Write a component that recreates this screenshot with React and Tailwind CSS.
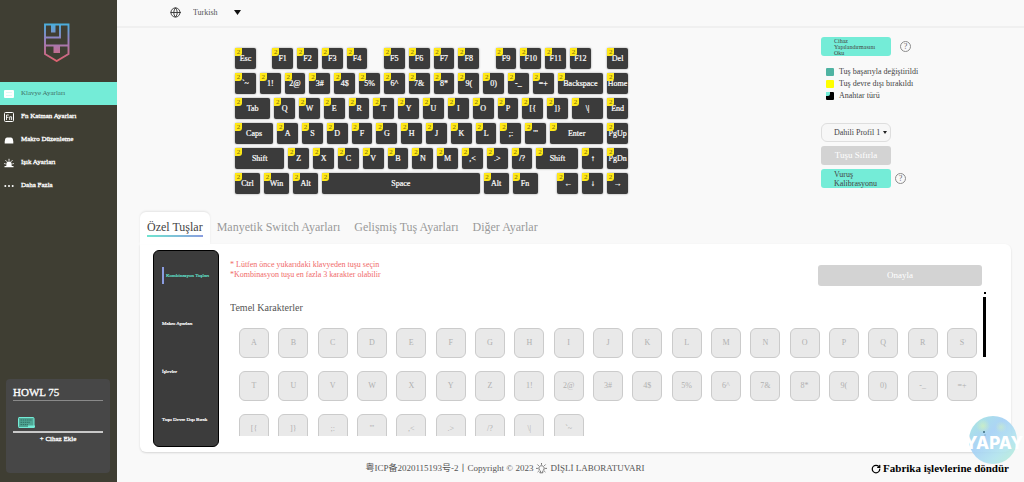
import { useState } from 'react'
import { Globe, RotateCw } from 'lucide-react'

// [label, width in key units], a null label leaves an empty space
const keyboardRows = [
  [['Esc', 1], [null, 0.5], ['F1', 1], ['F2', 1], ['F3', 1], ['F4', 1], [null, 0.5], ['F5', 1], ['F6', 1], ['F7', 1], ['F8', 1], [null, 0.5], ['F9', 1], ['F10', 1], ['F11', 1], ['F12', 1], [null, 0.5], ['Del', 1]],
  [['`~', 1], ['1!', 1], ['2@', 1], ['3#', 1], ['4$', 1], ['5%', 1], ['6^', 1], ['7&', 1], ['8*', 1], ['9(', 1], ['0)', 1], ['-_', 1], ['=+', 1], ['Backspace', 2], ['Home', 1]],
  [['Tab', 1.58], ['Q', 1], ['W', 1], ['E', 1], ['R', 1], ['T', 1], ['Y', 1], ['U', 1], ['I', 1], ['O', 1], ['P', 1], ['[{', 1], [']}', 1], ['\\|', 1.42], ['End', 1]],
  [['Caps', 1.7], ['A', 1], ['S', 1], ['D', 1], ['F', 1], ['G', 1], ['H', 1], ['J', 1], ['K', 1], ['L', 1], [';:', 1], ['\'"', 1], ['Enter', 2.3], ['PgUp', 1]],
  [['Shift', 2.15], ['Z', 1], ['X', 1], ['C', 1], ['V', 1], ['B', 1], ['N', 1], ['M', 1], [',<', 1], ['.>', 1], ['/?', 1], ['Shift', 1.85], ['↑', 1], ['PgDn', 1]],
  [['Ctrl', 1.17], ['Win', 1.17], ['Alt', 1.17], ['Space', 6.51], ['Alt', 1.17], ['Fn', 1.17], [null, 0.64], ['←', 1], ['↓', 1], ['→', 1]],
]
const ROW_UNITS = 16

const characters = [
  ...'ABCDEFGHIJKLMNOPQRSTUVWXYZ',
  '1!', '2@', '3#', '4$', '5%', '6^', '7&', '8*', '9(', '0)', '-_', '=+',
  '[{', ']}', ';:', '\'"', ',<', '.>', '/?', '\\|', '`~',
]

const navItems = ['Klavye Ayarları', 'Fn Katman Ayarları', 'Makro Düzenleme', 'Işık Ayarları', 'Daha Fazla']
const tabs = ['Özel Tuşlar', 'Manyetik Switch Ayarları', 'Gelişmiş Tuş Ayarları', 'Diğer Ayarlar']
const sections = ['Kombinasyon Tuşları', 'Makro Ayarları', 'İşlevler', 'Tuşu Devre Dışı Bırak']

function Logo() {
  return (
    <svg className="w-[27px] h-10" viewBox="0 0 27 40" fill="none" aria-hidden="true">
      <defs>
        <linearGradient id="logo" x1="0" y1="0" x2="0" y2="40" gradientUnits="userSpaceOnUse">
          <stop offset="0" stopColor="#3fb4e0" />
          <stop offset="0.45" stopColor="#9a7fc0" />
          <stop offset="1" stopColor="#e0606c" />
        </linearGradient>
      </defs>
      <path d="M2 2.500H25.500V32L13.700 39L2 32Z M17 2.500V15.500H2 M2 23.500H25" stroke="url(#logo)" strokeWidth="1.900" />
      <path d="M8 2H12.500V10.500H8Z M10.500 23H17V31H10.500Z" fill="url(#logo)" />
    </svg>
  )
}

function NavIcon({ index }) {
  return (
    <svg className="w-[10px] h-[10px]" viewBox="0 0 10 10" fill="currentColor" aria-hidden="true">
      {index === 0 && (
        <>
          <rect x="0" y="1" width="10" height="8" rx="1" />
          <path d="M2 3.500h6M2 6.500h6" stroke="#c9f7ee" strokeWidth="0.600" />
        </>
      )}
      {index === 1 && (
        <>
          <rect x="0.500" y="0.500" width="9" height="9" rx="1" fill="none" stroke="currentColor" />
          <path d="M2.500 8V3H4.800M2.500 5.300H4.500M5.700 8V4.800H7.600V8" fill="none" stroke="currentColor" strokeWidth="0.900" />
        </>
      )}
      {index === 2 && <path d="M3 2.500h4q1.500 0 1.800 1.500L9.300 6.500v2H.7v-2L1.200 4q.3-1.500 1.800-1.500z" />}
      {index === 3 && (
        <>
          <path d="M2.300 8V6.300a2.700 2.700 0 0 1 5.400 0V8H9.500v1.200h-9V8z" />
          <path d="M5 .8v2M.2 5.500l1.500.4M9.800 5.500l-1.500.4M1.500 2.200l1.600 1.600M8.500 2.200L6.900 3.800" stroke="currentColor" strokeWidth="0.900" />
        </>
      )}
      {index === 4 && (
        <>
          <circle cx="1.300" cy="5" r="1" />
          <circle cx="5" cy="5" r="1" />
          <circle cx="8.700" cy="5" r="1" />
        </>
      )}
    </svg>
  )
}

function LampIcon() {
  return (
    <svg className="w-[11px] h-[11px]" viewBox="0 0 11 11" fill="none" stroke="#555" strokeWidth="0.800" strokeLinecap="round" aria-hidden="true">
      <path d="M4.200 7.800A2.700 2.700 0 1 1 6.800 7.800V9.800H4.200Z" />
      <path d="M5.500.4V1.400M.4 5.400H1.500M9.500 5.400H10.600M1.700 1.800L2.500 2.600M9.300 1.800L8.500 2.600M1.900 8.800L2.600 8.100M9.100 8.800L8.400 8.100" />
    </svg>
  )
}

function Help() {
  return (
    <button aria-label="Yardım" className="w-[11px] h-[11px] flex items-center justify-center rounded-full border border-[#8c8c8c] text-[8px] leading-none text-[#666]">
      ?
    </button>
  )
}

function Sidebar() {
  const [active, setActive] = useState(0)

  return (
    <aside className="w-[117px] shrink-0 flex flex-col bg-[#3f3e33] text-white">
      <div className="h-[82px] pt-[22px] pr-1 flex justify-center">
        <Logo />
      </div>
      <nav>
        {navItems.map((item, i) => (
          <a
            key={item}
            href="#"
            onClick={() => setActive(i)}
            className={`h-[23px] pl-1 flex items-center gap-[7px] text-[7px] ${i === active ? 'bg-[#74ecd7]' : ''}`}
          >
            <NavIcon index={i} />
            <span className={i === active ? 'text-[#3f6f66]' : 'text-white [-webkit-text-stroke:0.3px_white]'}>{item}</span>
          </a>
        ))}
      </nav>

      {/* Connected device */}
      <div className="mt-auto mb-[9px] ml-[6px] mr-[7px] h-[94px] px-[7px] pt-[6px] rounded-sm bg-[#474747]">
        <h2 className="pb-px text-[11px] leading-[14px] [-webkit-text-stroke:0.3px_white] border-b border-[#8a8a8a]">HOWL 75</h2>
        <div className="h-8 pl-[5px] pt-4 border-b-2 border-[#c9c9c9]">
          <svg className="w-[17px] h-3" viewBox="0 0 17 12" fill="none" aria-hidden="true">
            <path d="M1 .5H15Q16 .5 16 1.500V10.500H1Q.5 10.500 .5 9.500V1.500Q.5 .5 1 .5Z" fill="#4fa594" stroke="#74ecd7" />
            <path d="M2.500 3H14M2.500 5.300H12M2.500 7.600H10" stroke="#2f6f62" strokeDasharray="1.500 .7" />
            <path d="M10 9.500H17" stroke="#74ecd7" strokeWidth="2" />
          </svg>
        </div>
        <button className="block mx-auto mt-px text-[7px] leading-[10px] [-webkit-text-stroke:0.3px_white]">+ Cihaz Ekle</button>
      </div>
    </aside>
  )
}

function Keyboard() {
  return (
    <div className="w-[397px]">
      {keyboardRows.map((row, r) => (
        <div key={r} className="flex">
          {row.map(([label, units], i) => (
            <div key={i} className="h-[25px] p-[2px] shrink-0" style={{ width: `${(units / ROW_UNITS) * 100}%` }}>
              {label && (
                <button className="relative w-full h-full flex items-center justify-center rounded-[2px] bg-[#3b3b3b] shadow-[0_0_2px_#888] text-[8px] leading-none text-white [-webkit-text-stroke:0.2px_white]">
                  <span className="absolute left-0 top-0 w-[7px] h-2 flex items-center justify-center rounded-br-[3px] bg-[#ffe818] text-[7px] leading-none text-[#7a6a10] [-webkit-text-stroke:0px]">2</span>
                  {label}
                </button>
              )}
            </div>
          ))}
        </div>
      ))}
    </div>
  )
}

function DeviceActions() {
  return (
    <div className="w-[96px] text-[8px] text-[#444]">
      <div className="flex items-center gap-[9px]">
        <button className="w-[70px] h-[19px] shrink-0 pl-[13px] pr-2 rounded-[3px] bg-[#74ecd7] text-left text-[6px] leading-[6px]">Cihaz Yapılandırmasını Oku</button>
        <Help />
      </div>

      <ul className="mt-[10px] pl-[5px] whitespace-nowrap leading-3">
        <li className="flex items-center gap-[5px]">
          <span className="w-2 h-2 shrink-0 rounded-[1px] bg-[#4fb3a2]" />
          Tuş başarıyla değiştirildi
        </li>
        <li className="flex items-center gap-[5px]">
          <span className="w-2 h-2 shrink-0 rounded-[1px] bg-[#ffff00]" />
          Tuş devre dışı bırakıldı
        </li>
        <li className="flex items-center gap-[5px]">
          <span className="w-2 h-2 shrink-0 rounded-[1px] bg-black">
            <span className="block w-1 h-1 rounded-br-[2px] bg-[#74ecd7]" />
          </span>
          Anahtar türü
        </li>
      </ul>

      <div className="relative w-[70px] mt-[21px]">
        <select aria-label="Profil" className="block w-full h-[19px] pl-3 appearance-none rounded-md border border-[#dedede] bg-[#f7f7f7]">
          <option>Dahili Profil 1</option>
        </select>
        <svg className="absolute right-1 top-2 w-1 h-[3px] pointer-events-none" viewBox="0 0 4 3" aria-hidden="true">
          <path d="M0 0H4L2 3Z" fill="#222" />
        </svg>
      </div>
      <button className="block w-[70px] h-[19px] mt-1 rounded-[3px] bg-[#d3d3d3] text-[9px] text-white">Tuşu Sıfırla</button>
      <div className="mt-1 flex items-center gap-1">
        <button className="w-[70px] h-[19px] shrink-0 pl-[13px] rounded-[3px] bg-[#74ecd7] text-left leading-[9px]">Vuruş Kalibrasyonu</button>
        <Help />
      </div>
    </div>
  )
}

function KeySettings() {
  const [tab, setTab] = useState(0)
  const [section, setSection] = useState(0)

  return (
    <section className="ml-[23px] mr-[13px]">
      <div className="flex">
        {tabs.map((name, i) => (
          <button
            key={name}
            onClick={() => setTab(i)}
            className={`h-8 px-[7px] text-[12px] leading-[14px] ${i === tab ? 'px-2 rounded-t-md bg-white text-[#444] shadow-[0_-1px_2px_#e4e4e4]' : 'text-[#999]'}`}
          >
            <span className={`block pb-px border-b-2 ${i === tab ? '[border-image:linear-gradient(to_right,#6fe6cf,#8b9ce0)_1]' : 'border-transparent'}`}>{name}</span>
          </button>
        ))}
      </div>

      <div className="h-[208px] pt-[6px] pb-[5px] pl-[13px] pr-[25px] flex gap-[11px] rounded-b-md rounded-tr-md bg-white shadow-[0_1px_2px_#d6d6d6]">
        <div className="w-[66px] shrink-0 px-2 pb-[3px] flex flex-col justify-around rounded-md border border-black bg-[#3c3c3c] text-white">
          {sections.map((name, i) => (
            <button
              key={name}
              onClick={() => setSection(i)}
              className={`h-[17px] text-left whitespace-nowrap text-[5px] leading-none ${i === section ? 'pl-[2px] border-l-2 border-[#8b9ce0] text-[#5fdcc4] [-webkit-text-stroke:0.2px_#5fdcc4]' : '[-webkit-text-stroke:0.2px_white]'}`}
            >
              {name}
            </button>
          ))}
        </div>

        <div className="flex-1 min-w-0 flex flex-col">
          <div className="pt-[10px] pr-1 flex justify-between items-start">
            <p className="text-[8px] leading-[10px] text-[#f06a6a]">
              * Lütfen önce yukarıdaki klavyeden tuşu seçin
              <br />
              *Kombinasyon tuşu en fazla 3 karakter olabilir
            </p>
            <button className="w-[164px] h-[21px] mt-[5px] rounded-[3px] bg-[#d3d3d3] text-[9px] text-white">Onayla</button>
          </div>

          <div className="flex mt-[6px]">
            <div className="flex-1 h-[144px] overflow-hidden">
              <h3 className="pt-[10px] text-[10px] leading-3 text-[#555]">Temel Karakterler</h3>
              <div className="mt-[14px] pl-[9px] pr-[6px] grid grid-cols-[repeat(auto-fill,30px)] justify-between gap-x-[9px] gap-y-[13px]">
                {characters.map((c) => (
                  <button key={c} className="h-[30px] rounded-md border border-[#cbcbcb] bg-[#e9e9e9] text-[8px] text-[#b0b0b0]">{c}</button>
                ))}
              </div>
            </div>
            {/* Scroll bar */}
            <div className="w-[3px] flex flex-col items-center gap-[3px]">
              <span className="w-[2px] h-[2px] bg-black" />
              <span className="w-[3px] h-[60px] bg-black" />
              <span className="w-[2px] h-[2px] mt-auto bg-[#444]" />
            </div>
          </div>
        </div>
      </div>
    </section>
  )
}

function Watermark() {
  return (
    <svg className="absolute right-0 bottom-4 w-[60px] h-[52px] pointer-events-none" viewBox="0 0 60 52" aria-hidden="true">
      <defs>
        <linearGradient id="orb" x1="0" y1="0" x2="1" y2="1">
          <stop offset="0" stopColor="#9fe6dc" />
          <stop offset="0.4" stopColor="#a3cff5" />
          <stop offset="0.7" stopColor="#b0e3ee" />
          <stop offset="1" stopColor="#b9efd0" />
        </linearGradient>
        <radialGradient id="spot">
          <stop offset="0" stopColor="#d5f5b8" />
          <stop offset="1" stopColor="#d5f5b8" stopOpacity="0" />
        </radialGradient>
      </defs>
      <circle cx="29" cy="26" r="24" fill="url(#orb)" opacity="0.900" />
      <circle cx="19" cy="12" r="7" fill="url(#spot)" opacity="0.700" />
      <circle cx="37" cy="13" r="6" fill="url(#spot)" opacity="0.500" />
      <text x="30" y="35" textAnchor="middle" fontFamily="Inter, sans-serif" fontSize="17" fontWeight="800" fill="white">YAPAY</text>
      <circle cx="20" cy="18" r="1" fill="#3d6d80" />
    </svg>
  )
}

export default function App() {
  return (
    <div className="relative min-h-screen flex overflow-hidden bg-[#f9f9f9] font-['Liberation_Serif','Noto_Sans_CJK_SC',serif]">
      <Sidebar />
      <main className="flex-1 min-w-0 flex flex-col">
        <header className="h-7 pl-[53px] pb-px flex items-center border-b-2 border-[#f0f0f0] text-[#555]">
          <Globe className="w-[11px] h-[11px] text-[#333]" />
          <div className="relative ml-3">
            <select aria-label="Dil" className="block w-12 appearance-none text-[8px]">
              <option>Turkish</option>
            </select>
            <svg className="absolute right-0 top-[3px] w-[7px] h-[5px] pointer-events-none" viewBox="0 0 7 5" aria-hidden="true">
              <path d="M0 0H7L3.500 5Z" fill="#111" />
            </svg>
          </div>
        </header>

        <div className="h-[184px] pl-[116px] pr-[107px] pt-[9px] flex justify-between">
          <div className="pt-[9px]">
            <Keyboard />
          </div>
          <DeviceActions />
        </div>

        <KeySettings />

        <footer className="relative h-[30px] pt-[3px] flex items-center justify-center text-[9px] text-[#555]">
          <p className="flex items-center gap-[3px] pr-[131px]">
            粤ICP备2020115193号-2丨Copyright © 2023
            <LampIcon />
            DİŞLİ LABORATUVARI
          </p>
          <button className="absolute right-[15px] flex items-center gap-[2px] text-[11px] font-bold text-black">
            <RotateCw className="w-[10px] h-[10px]" strokeWidth={3} />
            Fabrika işlevlerine döndür
          </button>
        </footer>
      </main>
      <Watermark />
    </div>
  )
}
